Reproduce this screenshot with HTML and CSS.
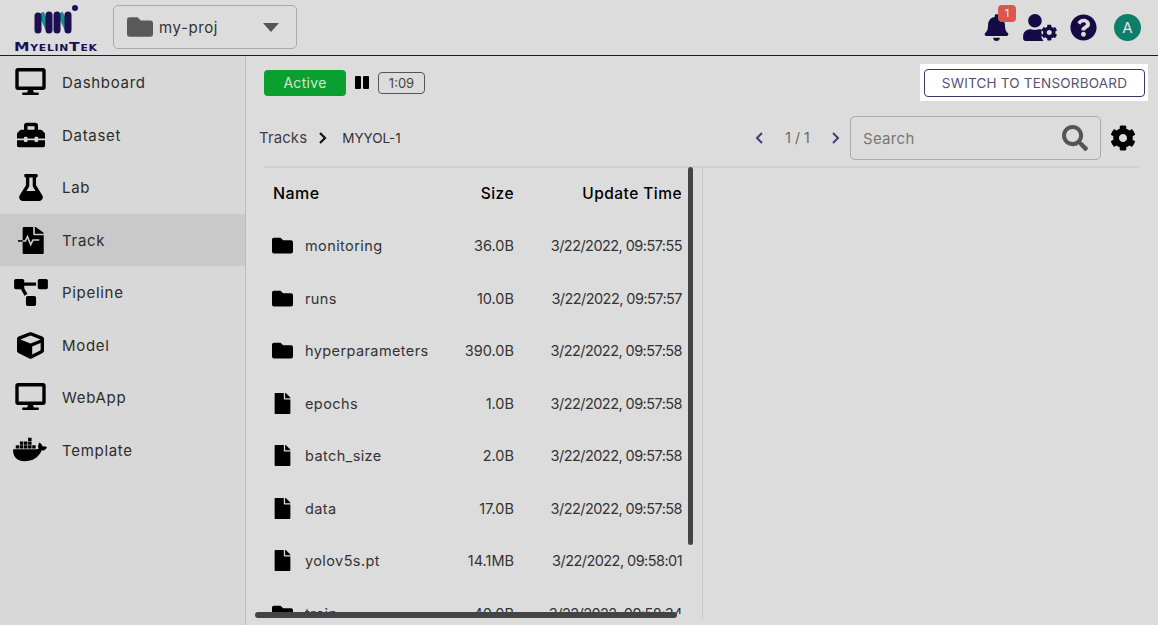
FILE: index.html
```html
<!DOCTYPE html>
<html lang="en">
<head>
    <meta charset="UTF-8">
    <title>Track</title>
    <link rel="stylesheet" href="styles.css">
</head>
<body>
    <svg class="defs" width="0" height="0">
        <symbol id="i-desktop" viewBox="0 0 576 512"><path d="M528 0H48C21.5 0 0 21.5 0 48v320c0 26.5 21.5 48 48 48h192l-16 48h-72c-13.3 0-24 10.7-24 24s10.7 24 24 24h272c13.3 0 24-10.7 24-24s-10.7-24-24-24h-72l-16-48h192c26.5 0 48-21.5 48-48V48c0-26.5-21.5-48-48-48zm-16 352H64V64h448v288z"/></symbol>
        <symbol id="i-toolbox" viewBox="0 0 512 512"><path d="M502.63 214.63l-45.25-45.25c-6-6-14.14-9.37-22.63-9.37H384V80c0-26.51-21.49-48-48-48H176c-26.51 0-48 21.49-48 48v80H77.25c-8.49 0-16.62 3.37-22.63 9.37L9.37 214.63c-6 6-9.37 14.14-9.37 22.63V320h128v-16c0-8.84 7.16-16 16-16h32c8.84 0 16 7.16 16 16v16h128v-16c0-8.84 7.16-16 16-16h32c8.84 0 16 7.16 16 16v16h128v-82.75c0-8.48-3.37-16.62-9.37-22.62zM320 160H192V96h128v64zm64 208c0 8.84-7.16 16-16 16h-32c-8.84 0-16-7.16-16-16v-16H192v16c0 8.84-7.16 16-16 16h-32c-8.84 0-16-7.16-16-16v-16H0v96c0 17.67 14.33 32 32 32h448c17.67 0 32-14.33 32-32v-96H384v16z"/></symbol>
        <symbol id="i-flask" viewBox="0 0 448 512"><path d="M437.2 403.5L320 215V64h8c13.3 0 24-10.7 24-24V24c0-13.3-10.7-24-24-24H120c-13.3 0-24 10.7-24 24v16c0 13.3 10.7 24 24 24h8v151L10.8 403.5C-18.5 450.6 15.3 512 70.9 512h306.2c55.7 0 89.4-61.5 60.1-108.5zM137.9 320l48.2-77.6c3.7-5.2 5.8-11.6 5.8-18.4V64h64v160c0 6.9 2.2 13.2 5.8 18.4l48.2 77.6h-172z"/></symbol>
        <symbol id="i-track" viewBox="0 0 512 512"><path d="M288 132V0H112C99 0 88 11 88 24v464c0 13 11 24 24 24h352c13 0 24-11 24-24V156H312c-13 0-24-11-24-24zM488 122v6H320V0h6c6 0 12 2 17 7l138 98c5 4 7 11 7 17z"/><path d="M0 264h140l40-80 60 150 44-86h120" fill="none" stroke="#d0d0d0" stroke-width="30"/><path d="M0 264h88" fill="none" stroke="#000" stroke-width="30"/></symbol>
        <symbol id="i-diagram" viewBox="0 0 640 512"><path d="M384 320H256c-17.67 0-32 14.33-32 32v128c0 17.67 14.33 32 32 32h128c17.67 0 32-14.33 32-32V352c0-17.67-14.33-32-32-32zM192 32c0-17.67-14.33-32-32-32H32C14.33 0 0 14.33 0 32v128c0 17.67 14.33 32 32 32h95.72l73.16 128.04C211.98 300.98 232.4 288 256 288h.28L192 175.51V128h224V64H192V32zM608 0H480c-17.67 0-32 14.33-32 32v128c0 17.67 14.33 32 32 32h128c17.67 0 32-14.33 32-32V32c0-17.67-14.33-32-32-32z"/></symbol>
        <symbol id="i-cube" viewBox="0 0 512 512"><path d="M239.1 6.3l-208 78c-18.7 7-31.1 25-31.1 45v225.1c0 18.2 10.3 34.8 26.5 42.9l208 104c13.5 6.8 29.4 6.8 42.9 0l208-104c16.3-8.1 26.5-24.8 26.5-42.9V129.3c0-20-12.4-37.9-31.1-44.9l-208-78C262 2.2 250 2.2 239.1 6.3zM256 68.4l192 72v1.1l-192 78-192-78v-1.1l192-72zm32 356V275.5l160-65v133.9l-160 80z"/></symbol>
        <symbol id="i-docker" viewBox="0 0 640 512"><path d="M349.9 236.3h-66.1v-59.4h66.1v59.4zm0-204.3h-66.1v60.7h66.1V32zm78.2 144.8H362v59.4h66.1v-59.4zm-156.3-72.1h-66.1v60.1h66.1v-60.1zm78.1 0h-66.1v60.1h66.1v-60.1zm276.8 100c-14.4-9.7-47.6-13.2-73.1-8.4-3.3-24-16.7-44.9-41.1-63.7l-14-9.3-9.3 14c-18.4 27.8-23.4 73.6-3.7 103.8-8.7 4.7-25.8 11.1-48.4 10.7H2.4c-8.7 50.8 5.8 116.8 44 162.1 37.1 43.9 92.7 66.2 165.4 66.2 157.4 0 273.9-72.5 328.4-204.2 21.4.4 67.6.1 91.3-45.2 1.5-2.5 6.6-13.2 8.5-17.1l-13.3-8.9zm-511.1-27.9h-66v59.4h66.1v-59.4zm78.1 0h-66.1v59.4h66.1v-59.4zm78.1 0h-66.1v59.4h66.1v-59.4zm-78.1-72.1h-66.1v60.1h66.1v-60.1z"/></symbol>
        <symbol id="i-folder" viewBox="0 0 512 512"><path d="M464 128H272l-64-64H48C21.49 64 0 85.49 0 112v288c0 26.51 21.49 48 48 48h416c26.51 0 48-21.49 48-48V176c0-26.51-21.49-48-48-48z"/></symbol>
        <symbol id="i-file" viewBox="0 0 384 512"><path d="M224 136V0H24C10.7 0 0 10.7 0 24v464c0 13.3 10.7 24 24 24h336c13.3 0 24-10.7 24-24V160H248c-13.2 0-24-10.8-24-24zm160-14.1v6.1H256V0h6.1c6.4 0 12.5 2.5 17 7l97.9 98c4.5 4.5 7 10.6 7 16.9z"/></symbol>
        <symbol id="i-cog" viewBox="0 0 512 512"><path d="M487.4 315.7l-42.6-24.6c4.3-23.2 4.3-47 0-70.2l42.6-24.6c4.9-2.8 7.1-8.6 5.5-14-11.1-35.6-30-67.8-54.7-94.6-3.8-4.1-10-5.1-14.8-2.3L380.8 110c-17.9-15.4-38.5-27.3-60.8-35.1V25.8c0-5.6-3.9-10.5-9.4-11.7-36.7-8.2-74.3-7.8-109.2 0-5.5 1.2-9.4 6.1-9.4 11.7V75c-22.2 7.9-42.8 19.8-60.8 35.1L88.7 85.5c-4.9-2.8-11-1.9-14.8 2.3-24.7 26.7-43.6 58.9-54.7 94.6-1.7 5.4.6 11.2 5.5 14L67.3 221c-4.3 23.2-4.3 47 0 70.2l-42.6 24.6c-4.9 2.8-7.1 8.6-5.5 14 11.1 35.6 30 67.8 54.7 94.6 3.8 4.1 10 5.1 14.8 2.3l42.6-24.6c17.9 15.4 38.5 27.3 60.8 35.1v49.2c0 5.6 3.9 10.5 9.4 11.7 36.7 8.2 74.3 7.8 109.2 0 5.5-1.2 9.4-6.1 9.4-11.7v-49.2c22.2-7.9 42.8-19.8 60.8-35.1l42.6 24.6c4.9 2.8 11 1.9 14.8-2.3 24.7-26.7 43.6-58.9 54.7-94.6 1.5-5.5-.7-11.3-5.6-14.1zM256 336c-44.1 0-80-35.9-80-80s35.9-80 80-80 80 35.9 80 80-35.9 80-80 80z"/></symbol>
    </svg>

    <header class="topbar">
        <div class="logo">
            <svg class="logo-mark" viewBox="0 0 48 32">
                <path d="M8 10l8 17M27 10l8 17" stroke="#1a8f8a" stroke-width="6" fill="none"/>
                <path d="M5 13v14M16 12v15M24 12v15M35 12v15" stroke="#1d0f52" stroke-width="7" stroke-linecap="round" fill="none"/>
                <circle cx="42" cy="5" r="3" fill="#1d0f52"/>
            </svg>
            <span class="logo-text">MyelinTek</span>
        </div>
        <div class="project">
            <svg class="project-folder"><use href="#i-folder"/></svg>
            <span class="project-name">my-proj</span>
            <span class="caret"></span>
        </div>
        <div class="top-icons">
            <div class="bell">
                <svg class="navy-icon bell-icon" viewBox="0 0 448 512"><path d="M224 512c35.32 0 63.97-28.65 63.97-64H160.03c0 35.35 28.65 64 63.97 64zm215.39-149.71c-19.32-20.76-55.47-51.99-55.47-154.29 0-77.7-54.48-139.9-127.94-155.16V32c0-17.67-14.32-32-31.98-32s-31.98 14.33-31.98 32v20.84C118.56 68.1 64.08 130.3 64.08 208c0 102.3-36.15 133.53-55.47 154.29-6 6.45-8.66 14.16-8.61 21.71.11 16.4 12.98 32 32.1 32h383.8c19.12 0 32-15.6 32.1-32 .05-7.55-2.61-15.27-8.61-21.71z"/></svg>
                <span class="badge">1</span>
            </div>
            <svg class="navy-icon user-icon" viewBox="0 0 640 512"><path d="M610.5 373.3c2.6-14.1 2.6-28.5 0-42.6l25.8-14.9c3-1.7 4.3-5.2 3.3-8.5-6.7-21.6-18.2-41.2-33.2-57.4-2.3-2.5-6-3.1-9-1.4l-25.8 14.9c-10.9-9.3-23.4-16.5-36.9-21.3v-29.8c0-3.4-2.4-6.4-5.7-7.1-22.3-5-45-4.8-66.2 0-3.3.7-5.7 3.7-5.7 7.1v29.8c-13.5 4.8-26 12-36.9 21.3l-25.8-14.9c-2.9-1.7-6.7-1.1-9 1.4-15 16.2-26.5 35.8-33.2 57.4-1 3.3.4 6.8 3.3 8.5l25.8 14.9c-2.6 14.1-2.6 28.5 0 42.6l-25.8 14.9c-3 1.7-4.3 5.2-3.3 8.5 6.7 21.6 18.2 41.1 33.2 57.4 2.3 2.5 6 3.1 9 1.4l25.8-14.9c10.9 9.3 23.4 16.5 36.9 21.3v29.8c0 3.4 2.4 6.4 5.7 7.1 22.3 5 45 4.8 66.2 0 3.3-.7 5.7-3.7 5.7-7.1v-29.8c13.5-4.8 26-12 36.9-21.3l25.8 14.9c2.9 1.7 6.7 1.1 9-1.4 15-16.2 26.5-35.8 33.2-57.4 1-3.3-.4-6.8-3.3-8.5l-25.8-14.9zM496 400.5c-26.8 0-48.5-21.8-48.5-48.5s21.8-48.5 48.5-48.5 48.5 21.8 48.5 48.5-21.7 48.5-48.5 48.5zM224 256c70.7 0 128-57.3 128-128S294.7 0 224 0 96 57.3 96 128s57.3 128 128 128zM48 512C21.5 512 0 490.5 0 464v-41.6C0 348.2 60.2 288 134.4 288h16.7c22.3 10.2 46.9 16 72.9 16s50.7-5.8 72.9-16h16.7c16 0 31 3.2 45 8.4-10 22-14 40-12 58 2 16 10 28 18 36-14 20-20 38-16 56 4 20 16 36 28 46 5 5 8 10 10 22H48z"/></svg>
            <svg class="navy-icon help-icon" viewBox="0 0 512 512"><path d="M504 256c0 136.997-111.043 248-248 248S8 392.997 8 256C8 119.083 119.043 8 256 8s248 111.083 248 248zM262.655 90c-54.497 0-89.255 22.957-116.549 63.758-3.536 5.286-2.353 12.415 2.715 16.258l34.699 26.31c5.205 3.947 12.621 3.008 16.665-2.122 17.864-22.658 30.113-35.797 57.303-35.797 20.429 0 45.698 13.148 45.698 32.958 0 14.976-12.363 22.667-32.534 33.976C247.128 238.528 216 254.941 216 296v4c0 6.627 5.373 12 12 12h56c6.627 0 12-5.373 12-12v-1.333c0-28.462 83.186-29.647 83.186-106.667 0-58.002-60.165-102-116.531-102zM256 338c-25.365 0-46 20.635-46 46 0 25.364 20.635 46 46 46s46-20.636 46-46c0-25.365-20.635-46-46-46z"/></svg>
            <span class="avatar">A</span>
        </div>
    </header>

    <div class="layout">
        <nav class="sidebar">
            <a class="nav-item" href="#"><svg class="nav-icon ic-desktop"><use href="#i-desktop"/></svg>Dashboard</a>
            <a class="nav-item" href="#"><svg class="nav-icon ic-toolbox"><use href="#i-toolbox"/></svg>Dataset</a>
            <a class="nav-item" href="#"><svg class="nav-icon ic-flask"><use href="#i-flask"/></svg>Lab</a>
            <a class="nav-item active" href="#"><svg class="nav-icon ic-track"><use href="#i-track"/></svg>Track</a>
            <a class="nav-item" href="#"><svg class="nav-icon ic-diagram"><use href="#i-diagram"/></svg>Pipeline</a>
            <a class="nav-item" href="#"><svg class="nav-icon ic-cube"><use href="#i-cube"/></svg>Model</a>
            <a class="nav-item" href="#"><svg class="nav-icon ic-desktop"><use href="#i-desktop"/></svg>WebApp</a>
            <a class="nav-item" href="#"><svg class="nav-icon ic-docker"><use href="#i-docker"/></svg>Template</a>
        </nav>

        <main class="content">
            <div class="status-row">
                <span class="status">Active</span>
                <span class="pause"><i></i><i></i></span>
                <span class="timer">1:09</span>
                <div class="switch-wrap">
                    <button class="switch-btn">SWITCH TO TENSORBOARD</button>
                </div>
            </div>

            <div class="path-row">
                <span class="crumb">Tracks</span>
                <svg class="crumb-sep" viewBox="0 0 10 14"><path d="M2 2l5 5-5 5" fill="none" stroke="#111" stroke-width="2.2"/></svg>
                <span class="crumb-current">MYYOL-1</span>
                <div class="pager">
                    <svg class="pager-arrow" viewBox="0 0 10 14"><path d="M8 2L3 7l5 5" fill="none" stroke="#4b3a78" stroke-width="2"/></svg>
                    <span class="pager-text">1 / 1</span>
                    <svg class="pager-arrow" viewBox="0 0 10 14"><path d="M2 2l5 5-5 5" fill="none" stroke="#4b3a78" stroke-width="2"/></svg>
                </div>
                <div class="search">
                    <span class="search-text">Search</span>
                    <svg class="search-icon" viewBox="0 0 512 512"><path d="M505 442.7L405.3 343c-4.5-4.5-10.6-7-17-7H372c27.6-35.3 44-79.7 44-128C416 93.1 322.9 0 208 0S0 93.1 0 208s93.1 208 208 208c48.3 0 92.7-16.4 128-44v16.3c0 6.4 2.5 12.5 7 17l99.7 99.7c9.4 9.4 24.6 9.4 33.9 0l28.3-28.3c9.4-9.4 9.4-24.6.1-34zM208 336c-70.7 0-128-57.2-128-128 0-70.7 57.2-128 128-128 70.7 0 128 57.2 128 128 0 70.7-57.2 128-128 128z"/></svg>
                </div>
                <svg class="settings"><use href="#i-cog"/></svg>
            </div>

            <div class="browser">
                <div class="file-list">
                    <div class="file-row file-head">
                        <span class="name">Name</span><span class="size">Size</span><span class="time">Update Time</span>
                    </div>
                    <div class="file-row"><span class="name"><svg class="row-icon"><use href="#i-folder"/></svg>monitoring</span><span class="size">36.0B</span><span class="time">3/22/2022, 09:57:55</span></div>
                    <div class="file-row"><span class="name"><svg class="row-icon"><use href="#i-folder"/></svg>runs</span><span class="size">10.0B</span><span class="time">3/22/2022, 09:57:57</span></div>
                    <div class="file-row"><span class="name"><svg class="row-icon"><use href="#i-folder"/></svg>hyperparameters</span><span class="size">390.0B</span><span class="time">3/22/2022, 09:57:58</span></div>
                    <div class="file-row"><span class="name"><svg class="row-icon"><use href="#i-file"/></svg>epochs</span><span class="size">1.0B</span><span class="time">3/22/2022, 09:57:58</span></div>
                    <div class="file-row"><span class="name"><svg class="row-icon"><use href="#i-file"/></svg>batch_size</span><span class="size">2.0B</span><span class="time">3/22/2022, 09:57:58</span></div>
                    <div class="file-row"><span class="name"><svg class="row-icon"><use href="#i-file"/></svg>data</span><span class="size">17.0B</span><span class="time">3/22/2022, 09:57:58</span></div>
                    <div class="file-row"><span class="name"><svg class="row-icon"><use href="#i-file"/></svg>yolov5s.pt</span><span class="size">14.1MB</span><span class="time">3/22/2022, 09:58:01</span></div>
                    <div class="file-row"><span class="name"><svg class="row-icon"><use href="#i-folder"/></svg>train</span><span class="size">40.0B</span><span class="time">3/22/2022, 09:58:34</span></div>
                </div>
                <div class="preview"></div>
                <span class="scroll-v"></span>
                <span class="scroll-h"></span>
            </div>
        </main>
    </div>
</body>
</html>
```
FILE: styles.css
```css
* {
    box-sizing: border-box;
}
html, body {
    height: 100%;
}
body {
    margin: 0;
    overflow: hidden;
    display: flex;
    flex-direction: column;
    font-family: Inter, "Open Sans", sans-serif;
    background-color: #dcdcdc;
    color: #2c2c2c;
}
.defs {
    position: absolute;
}

/* top bar */
.topbar {
    height: 56px;
    flex: none;
    display: flex;
    align-items: flex-start;
    border-bottom: 1px solid #1c1630;
}
.logo {
    width: 113px;
    height: 55px;
    flex: none;
    display: flex;
    flex-direction: column;
    align-items: center;
    padding-top: 3px;
}
.logo-mark {
    width: 48px;
    height: 32px;
    margin-bottom: 5px;
    display: block;
}
.logo-text {
    font-family: "DejaVu Sans", sans-serif;
    font-variant: small-caps;
    font-weight: 700;
    font-size: 13px;
    line-height: 13px;
    letter-spacing: 0.6px;
    color: #1d0f52;
    transform: translateX(-1px) scaleX(1.2);
}
.project {
    width: 184px;
    height: 44px;
    margin-top: 5px;
    display: flex;
    align-items: center;
    padding-left: 13px;
    border: 1px solid #aaa;
    border-radius: 5px;
}
.project-folder {
    width: 26px;
    height: 26px;
    fill: #595959;
    flex: none;
}
.project-name {
    margin-left: 6px;
    font-size: 15px;
    letter-spacing: 0.6px;
    color: #333;
}
.caret {
    margin-left: auto;
    margin-right: 17px;
    border-left: 8px solid transparent;
    border-right: 8px solid transparent;
    border-top: 9px solid #555;
}
.top-icons {
    margin-left: auto;
    height: 55px;
    display: flex;
    align-items: center;
    padding-right: 17px;
}
.navy-icon {
    fill: #150a45;
    display: block;
}
.bell {
    position: relative;
    margin-right: 14px;
}
.bell-icon {
    width: 25px;
    height: 27px;
}
.badge {
    position: absolute;
    top: -9px;
    left: 14px;
    width: 18px;
    height: 17px;
    border-radius: 4px;
    background-color: #dc5650;
    color: #eee;
    font-size: 11px;
    line-height: 17px;
    text-align: center;
}
.user-icon {
    width: 34px;
    height: 27px;
    margin-right: 13px;
}
.help-icon {
    width: 27px;
    height: 27px;
    margin-right: 17px;
}
.avatar {
    width: 27px;
    height: 27px;
    border-radius: 50%;
    background-color: #0b7f6a;
    color: #e6e6e6;
    font-size: 15px;
    line-height: 27px;
    text-align: center;
}

/* sidebar */
.layout {
    flex: 1;
    min-height: 0;
    display: flex;
}
.sidebar {
    width: 246px;
    flex: none;
    padding-top: 0.4px;
    background-color: #d8d8d8;
    border-right: 1px solid #bdbdbd;
}
.nav-item {
    height: 52.5px;
    display: flex;
    align-items: center;
    color: #2c2c2c;
    text-decoration: none;
    font-size: 15px;
    letter-spacing: 0.7px;
    position: relative;
    padding-left: 62px;
}
.nav-item.active {
    background-color: #c9c9c9;
}
.nav-icon {
    position: absolute;
    fill: #000;
}
.ic-desktop {
    width: 31px;
    height: 27px;
    left: 15px;
    top: 12px;
}
.ic-toolbox {
    width: 28px;
    height: 28px;
    left: 17px;
    top: 12px;
}
.ic-flask {
    width: 24px;
    height: 27px;
    left: 19px;
    top: 13px;
}
.ic-track {
    width: 27px;
    height: 27px;
    left: 18px;
    top: 13px;
}
.ic-diagram {
    width: 34px;
    height: 27px;
    left: 14px;
    top: 13px;
}
.ic-cube {
    width: 27px;
    height: 27px;
    left: 17px;
    top: 13px;
}
.ic-docker {
    width: 34px;
    height: 27px;
    left: 13px;
    top: 12px;
}

/* main area */
.content {
    flex: 1;
    min-width: 0;
    padding-left: 18px;
    padding-right: 18px;
}
.status-row {
    height: 53px;
    display: flex;
    align-items: center;
}
.status {
    width: 82px;
    height: 26px;
    border-radius: 4px;
    background-color: #0a9f2e;
    color: #cfe8d4;
    font-size: 14px;
    letter-spacing: 0.3px;
    line-height: 26px;
    text-align: center;
}
.pause {
    display: flex;
    gap: 2px;
    margin-left: 9px;
}
.pause i {
    width: 6px;
    height: 13px;
    border-radius: 1px;
    background-color: #000;
}
.timer {
    width: 47px;
    height: 22px;
    margin-left: 9px;
    border: 1px solid #555;
    border-radius: 4px;
    font-size: 13px;
    line-height: 20px;
    text-align: center;
    color: #444;
}
.switch-wrap {
    margin-left: auto;
    margin-right: -8px;
    width: 228px;
    height: 37px;
    background-color: #fff;
    padding: 5px 4px 4px;
}
.switch-btn {
    width: 221px;
    height: 28px;
    padding: 0;
    background-color: #fff;
    border: 1px solid #3f3560;
    border-radius: 4px;
    font-family: inherit;
    font-size: 13.5px;
    letter-spacing: 0.2px;
    color: #5a5075;
}
.path-row {
    height: 57px;
    margin-left: -5px;
    display: flex;
    align-items: center;
}
.crumb {
    font-size: 15px;
    letter-spacing: 0.1px;
    color: #3c3c4a;
}
.crumb-sep {
    width: 10px;
    height: 14px;
    margin-left: 11px;
}
.crumb-current {
    margin-left: 14px;
    font-size: 13.5px;
    color: #333;
}
.pager {
    margin-left: auto;
    display: flex;
    align-items: center;
}
.pager-arrow {
    width: 10px;
    height: 14px;
}
.pager-text {
    width: 67px;
    font-size: 14px;
    text-align: center;
    color: #666;
}
.search {
    width: 251px;
    height: 44px;
    margin-left: 9px;
    padding: 0 12px;
    display: flex;
    align-items: center;
    justify-content: space-between;
    border: 1px solid #aaa;
    border-radius: 5px;
}
.search-text {
    margin-top: 1px;
    font-size: 15px;
    letter-spacing: 0.3px;
    color: #777;
}
.search-icon {
    width: 26px;
    height: 26px;
    fill: #555;
}
.settings {
    width: 26px;
    height: 26px;
    margin-left: 9px;
    margin-right: 4px;
    fill: #000;
}

/* file browser */
.browser {
    height: 452px;
    position: relative;
    display: flex;
    border-top: 2px solid #d0d0d0;
}
.file-list {
    width: 438px;
    height: 446px;
    flex: none;
    overflow: hidden;
}
.file-row {
    height: 52.5px;
    display: flex;
    align-items: center;
    font-size: 14.5px;
    color: #333;
    padding-left: 8px;
}
.file-row .name {
    letter-spacing: 0.4px;
}
.file-row .time {
    letter-spacing: -0.55px;
}
.file-row.file-head {
    height: 51.5px;
    padding-left: 9px;
    padding-bottom: 1.5px;
    color: #000;
    font-size: 15.5px;
    font-weight: 500;
}
.file-head .name {
    width: 187px;
    font-size: 16px;
    letter-spacing: 0.45px;
}
.file-head .size,
.file-head .time {
    letter-spacing: 0.45px;
}
.name {
    width: 188px;
    display: flex;
    align-items: center;
}
.row-icon {
    width: 21px;
    height: 21px;
    margin-right: 12px;
    flex: none;
}
.size {
    width: 54px;
    text-align: right;
}
.time {
    width: 168px;
    text-align: right;
}
.preview {
    flex: 1;
    border-left: 1px solid #c8c8c8;
}
.scroll-v {
    position: absolute;
    left: 424px;
    top: -1px;
    width: 5px;
    height: 378px;
    border-radius: 3px;
    background-color: #444;
}
.scroll-h {
    position: absolute;
    left: -9px;
    top: 444px;
    width: 422px;
    height: 6px;
    border-radius: 3px;
    background-color: #444;
}
```
